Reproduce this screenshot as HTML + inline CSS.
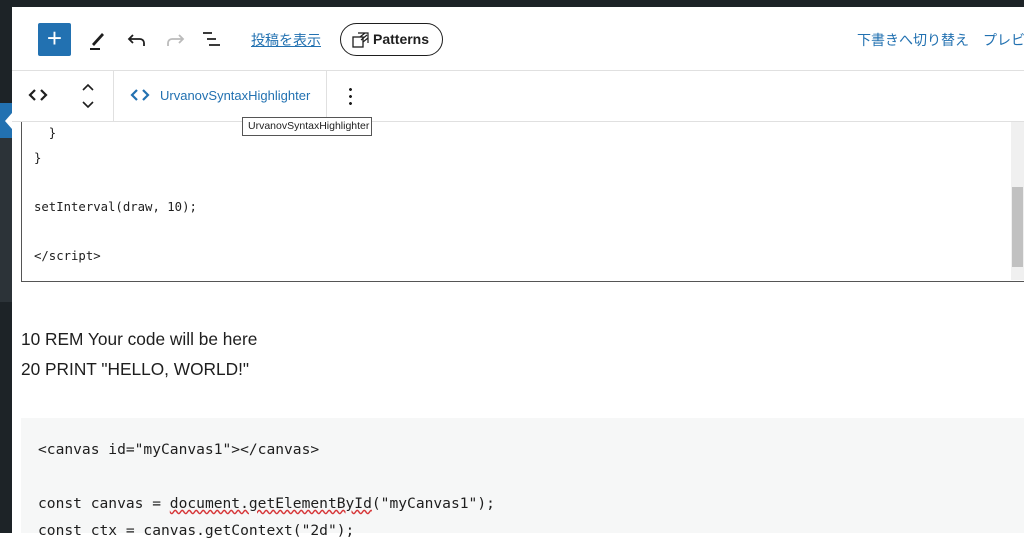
<!DOCTYPE html>
<html><head><meta charset="utf-8"><style>
*{margin:0;padding:0;box-sizing:border-box}
body{width:1024px;height:533px;overflow:hidden;background:#fff;position:relative;font-family:"Liberation Sans","Noto Sans CJK JP",sans-serif}
.abs{position:absolute}
.mono{font-family:"DejaVu Sans Mono","Liberation Mono",monospace}
</style></head><body>
<div class="abs" style="left:0;top:0;width:1024px;height:7px;background:#1d2327"></div>
<div class="abs" style="left:0;top:0;width:12px;height:533px;background:#1d2327"></div>
<div class="abs" style="left:0;top:138px;width:12px;height:164px;background:#2c3338"></div>
<div class="abs" style="left:0;top:103px;width:12px;height:35px;background:#2271b1"></div>
<div class="abs" style="left:5px;top:113px;width:0;height:0;border-top:8px solid transparent;border-bottom:8px solid transparent;border-right:7px solid #fff"></div>

<div class="abs" style="left:12px;top:70px;width:1012px;height:1px;background:#e0e0e0"></div>
<div class="abs" style="left:38px;top:23px;width:33px;height:33px;background:#2271b1;border-radius:2px;color:#fff;font-size:26px;line-height:31px;text-align:center">+</div>
<svg class="abs" style="left:86px;top:27px" width="24" height="24" viewBox="0 0 24 24"><path d="M6 17 L16 6 l2 2 L8 19 z" fill="#1e1e1e"/><rect x="4" y="21" width="10" height="2" fill="#1e1e1e"/></svg>
<svg class="abs" style="left:125px;top:28px" width="24" height="24" viewBox="0 0 24 24"><path d="M8 7 L4 11 L8 15 M4 11 H15 a4 4 0 0 1 4 4 v3" fill="none" stroke="#1e1e1e" stroke-width="1.8"/></svg>
<svg class="abs" style="left:163px;top:28px" width="24" height="24" viewBox="0 0 24 24"><path d="M16 7 L20 11 L16 15 M20 11 H9 a4 4 0 0 0 -4 4 v3" fill="none" stroke="#bbb" stroke-width="1.8"/></svg>
<svg class="abs" style="left:200px;top:28px" width="24" height="24" viewBox="0 0 24 24"><path d="M3 5h9M7 11h9M9 17h11" stroke="#1e1e1e" stroke-width="1.8"/></svg>
<div class="abs" style="left:251px;top:30px;font-size:14px;color:#2271b1;text-decoration:underline">投稿を表示</div>
<div class="abs" style="left:340px;top:23px;width:103px;height:33px;border:1.5px solid #1e1e1e;border-radius:17px;font-size:14px;font-weight:bold;color:#1e1e1e;line-height:30px;padding-left:32px">Patterns</div>
<svg class="abs" style="left:352px;top:31px" width="18" height="18" viewBox="0 0 18 18"><rect x="1" y="6" width="10" height="10" fill="none" stroke="#1e1e1e" stroke-width="1.3"/><path d="M6 2h10v10M8 6l5-4M9 9l6-5M11 11l5-4" stroke="#1e1e1e" stroke-width="1.2" fill="none"/></svg>
<div class="abs" style="left:857px;top:30px;font-size:14px;color:#2271b1;white-space:nowrap">下書きへ切り替え　プレビュー</div>

<div class="abs" style="left:12px;top:121px;width:1012px;height:1px;background:#e0e0e0"></div>
<div class="abs" style="left:113px;top:71px;width:1px;height:50px;background:#e0e0e0"></div>
<div class="abs" style="left:326px;top:71px;width:1px;height:50px;background:#e0e0e0"></div>
<svg class="abs" style="left:28px;top:87px" width="20" height="16" viewBox="0 0 20 16"><path d="M7 3L2 8l5 5M13 3l5 5-5 5" fill="none" stroke="#1e1e1e" stroke-width="2.2"/></svg>
<svg class="abs" style="left:80px;top:82px" width="16" height="28" viewBox="0 0 16 28"><path d="M3 8l5-5 5 5M3 20l5 5 5-5" fill="none" stroke="#1e1e1e" stroke-width="1.6"/></svg>
<svg class="abs" style="left:130px;top:87px" width="20" height="16" viewBox="0 0 20 16"><path d="M7 3L2 8l5 5M13 3l5 5-5 5" fill="none" stroke="#2271b1" stroke-width="2.2"/></svg>
<div class="abs" style="left:160px;top:88px;font-size:13px;color:#2271b1">UrvanovSyntaxHighlighter</div>
<div class="abs" style="left:349px;top:86px;width:3px;height:20px;background:radial-gradient(circle,#1e1e1e 1.3px,transparent 1.6px) 0 0/3px 7px"></div>

<div class="abs" style="left:21px;top:122px;width:1003px;height:160px;border-left:1px solid #555;border-bottom:1px solid #555"></div>
<div class="abs" style="left:1011px;top:122px;width:13px;height:158px;background:#f0f0f0"></div>
<div class="abs" style="left:1012px;top:187px;width:11px;height:80px;background:#c1c1c1"></div>
<div class="abs mono" style="left:34px;top:121px;font-size:12.3px;line-height:24.5px;color:#1e1e1e;white-space:pre">  }
}

setInterval(draw, 10);

&lt;/script&gt;</div>
<div class="abs" style="left:242px;top:117px;width:130px;height:19px;border:1px solid #555;background:#fff;font-size:10.5px;line-height:17px;padding-left:5px;color:#1e1e1e;white-space:nowrap">UrvanovSyntaxHighlighter</div>

<div class="abs" style="left:21px;top:324px;font-size:17.3px;line-height:30px;color:#1e1e1e">10 REM Your code will be here<br>20 PRINT "HELLO, WORLD!"</div>

<div class="abs" style="left:21px;top:418px;width:1003px;height:115px;background:#f6f7f7"></div>
<div class="abs mono" style="left:38px;top:436px;font-size:14.6px;line-height:27px;color:#1e1e1e;white-space:pre">&lt;canvas id="myCanvas1"&gt;&lt;/canvas&gt;

const canvas = <span style="text-decoration:underline wavy #d63638">document.getElementById</span>("myCanvas1");
const ctx = canvas.getContext("2d");</div>
</body></html>
